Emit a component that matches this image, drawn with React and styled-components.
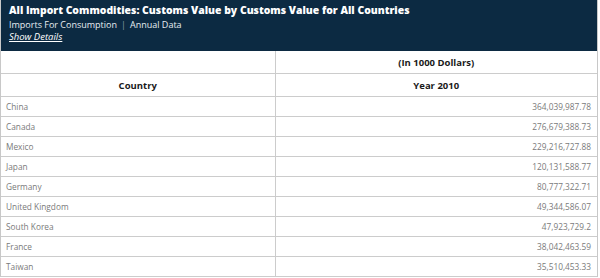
import React from "react";
import styled, { createGlobalStyle } from "styled-components";

const Global = createGlobalStyle`
  html, body { margin: 0; padding: 0; background: #fff; }
  body { font-family: "Open Sans", "DejaVu Sans", sans-serif; }
`;

const Wrap = styled.div`
  width: 598px;
  border-left: 1px solid #c8c8c8;
  border-right: 1px solid #c8c8c8;
  box-sizing: border-box;
`;

const Header = styled.header`
  background: #0c2a42;
  color: #fff;
  height: 51px;
  box-sizing: border-box;
  padding: 3px 8px 0 8px;
  display: flex;
  flex-direction: column;
`;

const Title = styled.h1`
  margin: 0;
  font-size: 10.4px;
  font-weight: 800;
  line-height: 14px;
`;

const Sub = styled.div`
  margin-top: 2px;
  font-size: 9px;
  line-height: 12px;
  color: #e8edf2;
  display: flex;
  gap: 4px;
`;

const Sep = styled.span`
  color: #8c9aa8;
`;

const Details = styled.a`
  margin-top: 0px;
  font-size: 9.5px;
  line-height: 12px;
  font-style: italic;
  text-decoration: underline;
  color: #fff;
`;

const Table = styled.table`
  width: 100%;
  border-collapse: collapse;
  table-layout: fixed;
`;

const Th = styled.th`
  height: 22px;
  padding: 0;
  font-size: 9.5px;
  font-weight: 700;
  color: #1a1a1a;
  text-align: center;
  border-bottom: 1px solid #cccccc;
  border-left: ${p => (p.$divider ? "1px solid #cccccc" : "none")};
`;

const Td = styled.td`
  height: 19px;
  padding: 0 6px 0 5px;
  font-size: 8.3px;
  color: #7a7a7a;
  text-align: ${p => (p.$num ? "right" : "left")};
  border-bottom: 1px solid #cccccc;
  border-left: ${p => (p.$num ? "1px solid #cccccc" : "none")};
`;

const rows = [
  ["China", "364,039,987.78"],
  ["Canada", "276,679,388.73"],
  ["Mexico", "229,216,727.88"],
  ["Japan", "120,131,588.77"],
  ["Germany", "80,777,322.71"],
  ["United Kingdom", "49,344,586.07"],
  ["South Korea", "47,923,729.2"],
  ["France", "38,042,463.59"],
  ["Taiwan", "35,510,453.33"],
];

export default function App() {
  return (
    <Wrap>
      <Global />
      <Header>
        <Title>All Import Commodities: Customs Value by Customs Value for All Countries</Title>
        <Sub>
          <span>Imports For Consumption</span>
          <Sep>|</Sep>
          <span>Annual Data</span>
        </Sub>
        <Details>Show Details</Details>
      </Header>
      <Table>
        <colgroup>
          <col style={{ width: "274px" }} />
          <col />
        </colgroup>
        <thead>
          <tr>
            <Th></Th>
            <Th $divider>(In 1000 Dollars)</Th>
          </tr>
          <tr>
            <Th>Country</Th>
            <Th $divider>Year 2010</Th>
          </tr>
        </thead>
        <tbody>
          {rows.map(([c, v]) => (
            <tr key={c}>
              <Td>{c}</Td>
              <Td $num>{v}</Td>
            </tr>
          ))}
        </tbody>
      </Table>
    </Wrap>
  );
}
